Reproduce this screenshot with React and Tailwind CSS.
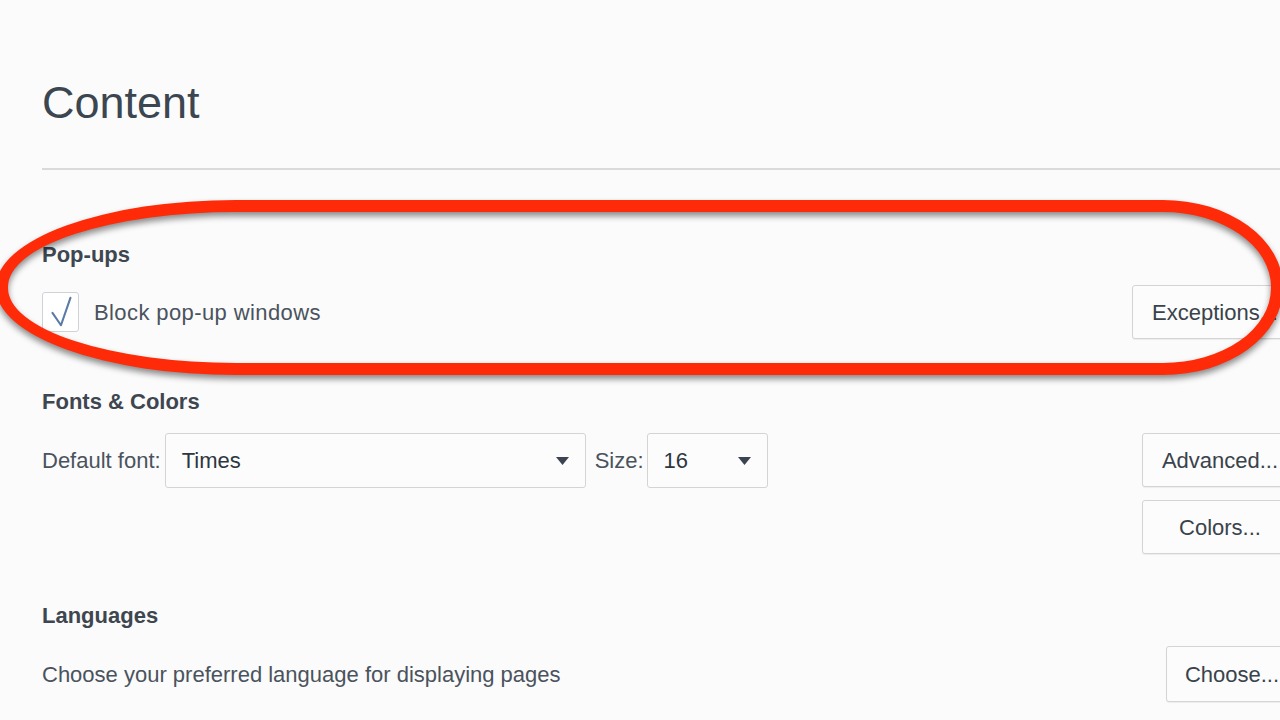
const Btn = ({ children, className = '' }) => (
  <div
    className={`h-[54px] flex items-center justify-center rounded-[3px] border border-[#d4d4d4] bg-[#fcfcfc] text-[22px] text-[#3a424b] shadow-[0_1px_1px_rgba(0,0,0,0.06)] ${className}`}
  >
    {children}
  </div>
);

const Arrow = () => (
  <svg width="13" height="8" viewBox="0 0 13 8" className="shrink-0">
    <path d="M0 0 H13 L6.5 8 Z" fill="#3b4450" />
  </svg>
);

const Select = ({ value, className = '' }) => (
  <div
    className={`h-[55px] flex items-center justify-between rounded-[3px] border border-[#d4d4d4] bg-[#fcfcfc] pl-[16px] pr-[16px] text-[22px] text-[#2f363e] ${className}`}
  >
    <span>{value}</span>
    <Arrow />
  </div>
);

export default function App() {
  return (
    <div className="relative w-[1280px] h-[720px] overflow-hidden bg-[#fbfbfb] font-['Liberation_Sans',Arial,sans-serif]">
      <div className="w-[1340px] px-[42px]">
        <h1 className="mt-[75px] h-[56px] text-[45px] leading-[56px] text-[#3c4651]">Content</h1>
        <div className="mt-[37px] h-[2px] bg-[#dadada]" />

        <div className="mt-[71px] text-[22px] leading-[28px] font-bold text-[#3e4650]">Pop-ups</div>
        <div className="mt-[16px] flex items-center justify-between">
          <div className="flex items-center">
            <div className="w-[37px] h-[40px] rounded-[3px] border border-[#cfd3d8] bg-white flex items-center justify-center">
              <svg width="37" height="40" viewBox="0 0 37 40">
                <path d="M10 21 L19 34 L29 5" fill="none" stroke="#5b7aa6" strokeWidth="2.2" strokeLinejoin="round" strokeLinecap="round" />
              </svg>
            </div>
            <span className="ml-[15px] text-[22px] tracking-[0.4px] text-[#4a535d]">Block pop-up windows</span>
          </div>
          <Btn className="w-[166px]">Exceptions...</Btn>
        </div>

        <div className="mt-[49px] text-[22px] leading-[28px] font-bold text-[#3e4650]">Fonts &amp; Colors</div>
        <div className="mt-[17px] flex items-start justify-between">
          <div className="flex items-center text-[22px] text-[#4a535d]">
            <span>Default font:</span>
            <Select value="Times" className="ml-[4px] w-[421px]" />
            <span className="ml-[9px]">Size:</span>
            <Select value="16" className="ml-[3px] w-[121px]" />
          </div>
          <div className="flex flex-col gap-[13px]">
            <Btn className="w-[156px]">Advanced...</Btn>
            <Btn className="w-[156px]">Colors...</Btn>
          </div>
        </div>

        <div className="mt-[48px] text-[22px] leading-[28px] font-bold text-[#3e4650]">Languages</div>
        <div className="mt-[16px] flex items-center justify-between">
          <span className="text-[22px] text-[#4a535d]">Choose your preferred language for displaying pages</span>
          <Btn className="w-[132px] h-[56px]">Choose...</Btn>
        </div>
      </div>

      {/* annotation ring */}
      <div className="absolute left-[-4px] top-[200px] w-[1287px] h-[175px] rounded-[240px_120px_120px_240px/87px] border-[12px] border-[#ff2a08] drop-shadow-[0_4px_3px_rgba(0,0,0,0.45)]" />
    </div>
  );
}
